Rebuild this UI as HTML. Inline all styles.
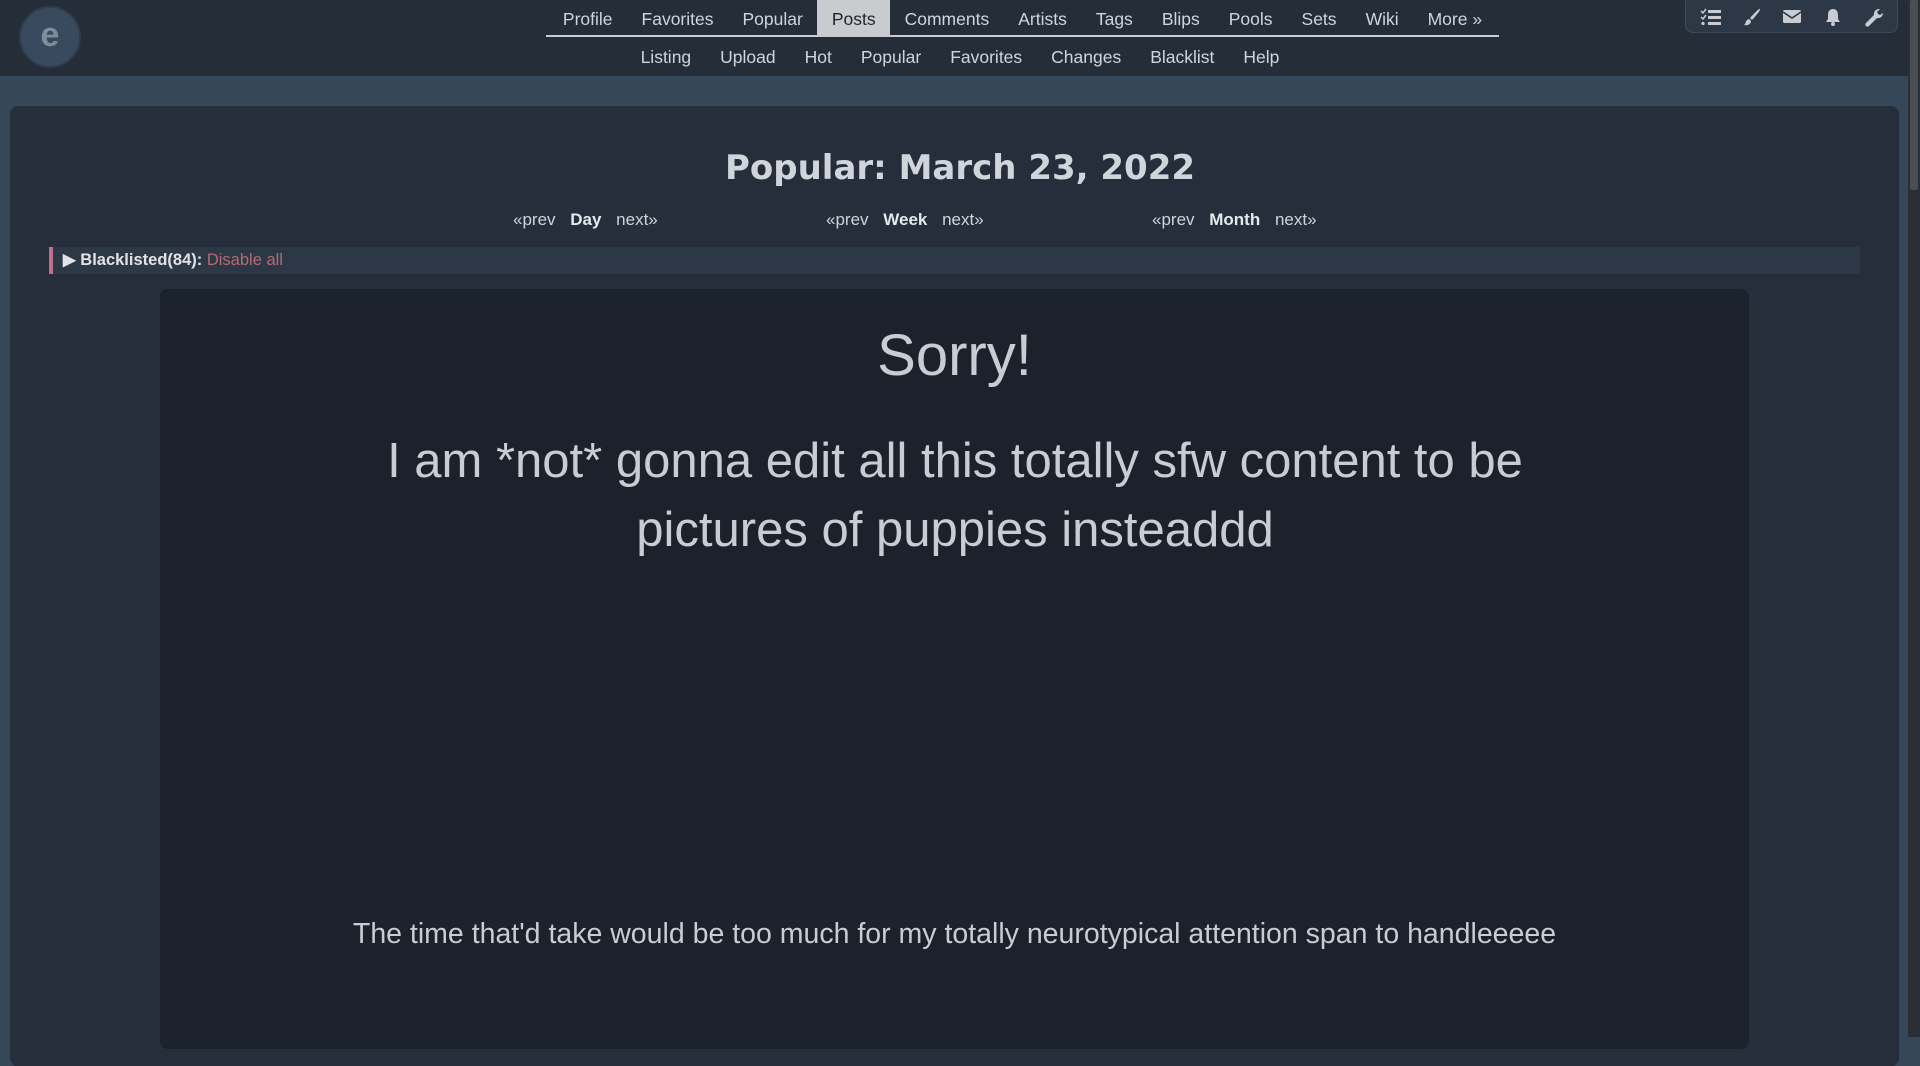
<!DOCTYPE html>
<html><head><meta charset="utf-8"><style>
*{margin:0;padding:0;box-sizing:border-box}
html,body{width:1920px;height:1037px;overflow:hidden;background:#37475a;font-family:"Liberation Sans",sans-serif;color:#d0d5db}
#hdr{position:absolute;left:0;top:0;width:1920px;height:76px;background:#252d38}
#sb{position:absolute;right:0;top:0;width:12px;height:1037px;background:#2b2f35}
#sb i{position:absolute;left:2px;top:0;width:8px;height:190px;background:#4a4f56;border-radius:2px}
.logo{position:absolute;left:19px;top:6px;width:62px;height:62px;border-radius:50%;background:#3a4a5e;border:2px solid #2f3c4d}
.logo span{position:absolute;left:0;top:8px;width:100%;text-align:center;font-size:34px;color:#7f8c9c;font-weight:bold}
#nav1{position:absolute;left:546px;top:0;width:953px;height:37px;border-bottom:2px solid #c8ccd2;display:flex;justify-content:center;font-size:17.5px}
#nav1 a{display:block;padding:0 14.5px;line-height:39px;color:#d0d5db}
#nav1 a.on{background:#c9cbcf;color:#1f2630}
#nav2{position:absolute;left:0;top:47px;width:1920px;text-align:center;font-size:17.5px;padding-left:0}
#nav2 a{margin:0 14.5px;color:#d0d5db}
#icons{position:absolute;left:1685px;top:-5px;width:213px;height:38px;background:#2d3846;border:1px solid #3b4a5c;border-radius:8px}
#icons svg{position:absolute;top:12px}
#main{position:absolute;left:10px;top:106px;width:1889px;height:960px;background:#252e3a;border-radius:8px}
h1{position:absolute;left:0;top:148px;width:1920px;text-align:center;font-family:"DejaVu Sans",sans-serif;font-size:34px;font-weight:bold;color:#d0d5db}
.pn{position:absolute;top:210px;font-size:17px;color:#d0d5db;white-space:nowrap}
.pn b{margin:0 10px;color:#e5e8ec}
#bl{position:absolute;left:49px;top:247px;width:1811px;height:27px;background:#2d3846;border-left:4px solid #c0708f;font-size:16.5px;line-height:27px;padding-left:10px;color:#e0e3e7}
#bl span{color:#b56a72;font-weight:normal}
#box{position:absolute;left:160px;top:289px;width:1589px;height:760px;background:#1c222b;border-radius:8px;text-align:center;color:#c8ccd3}
#s1{position:absolute;top:33px;width:100%;font-size:58px;font-weight:300}
#s2{position:absolute;top:138px;left:215px;width:1160px;font-size:49px;line-height:69px;font-weight:300}
#s3{position:absolute;top:629px;width:100%;font-size:28.5px;font-weight:300}
</style></head><body>
<div id="hdr"></div>
<div class="logo"><span>e</span></div>
<div id="nav1"><a>Profile</a><a>Favorites</a><a>Popular</a><a class="on">Posts</a><a>Comments</a><a>Artists</a><a>Tags</a><a>Blips</a><a>Pools</a><a>Sets</a><a>Wiki</a><a>More »</a></div>
<div id="nav2"><a>Listing</a><a>Upload</a><a>Hot</a><a>Popular</a><a>Favorites</a><a>Changes</a><a>Blacklist</a><a>Help</a></div>
<div id="icons">
<svg style="left:14px" width="22" height="18" viewBox="0 0 22 18" fill="#c8ccd2"><rect x="8" y="2" width="13" height="3"/><rect x="8" y="8" width="13" height="3"/><rect x="8" y="14" width="13" height="3"/><path d="M1 3l2 2 3-4" stroke="#c8ccd2" stroke-width="1.5" fill="none"/><path d="M1 9l2 2 3-4" stroke="#c8ccd2" stroke-width="1.5" fill="none"/><circle cx="3" cy="15.5" r="1.6"/></svg>
<svg style="left:56px" width="20" height="18" viewBox="0 0 20 18" fill="#c8ccd2"><path d="M18 1c1 1-6 9-8 11l-2-2C10 8 17 0 18 1z"/><path d="M7 11l2 2c0 3-3 5-7 4 2-1 1-5 5-6z"/></svg>
<svg style="left:96px" width="20" height="16" viewBox="0 0 20 16" fill="#c8ccd2"><rect x="1" y="2" width="18" height="13" rx="1.5"/><path d="M1 4l9 6 9-6" stroke="#2d3846" stroke-width="1.6" fill="none"/></svg>
<svg style="left:138px" width="18" height="18" viewBox="0 0 18 18" fill="#c8ccd2"><path d="M9 1c3 0 5 2 5 6v4l2 3H2l2-3V7c0-4 2-6 5-6z"/><circle cx="9" cy="16" r="2"/></svg>
<svg style="left:178px" width="20" height="20" viewBox="0 0 20 20" fill="#c8ccd2"><path d="M15 1a5 5 0 00-5 6L2 15a2 2 0 003 3l8-8a5 5 0 006-5l-3 2-2-1-1-2 3-3z"/></svg>
</div>
<div id="sb"><i></i></div>
<div id="main"></div>
<h1>Popular: March 23, 2022</h1>
<div class="pn" style="left:513px">«prev <b>Day</b> next»</div>
<div class="pn" style="left:826px">«prev <b>Week</b> next»</div>
<div class="pn" style="left:1152px">«prev <b>Month</b> next»</div>
<div id="bl"><b>▶ Blacklisted(84):</b> <span>Disable all</span></div>
<div id="box">
<div id="s1">Sorry!</div>
<div id="s2">I am *not* gonna edit all this totally sfw content to be pictures of puppies insteaddd</div>
<div id="s3">The time that'd take would be too much for my totally neurotypical attention span to handleeeee</div>
</div>
</body></html>
